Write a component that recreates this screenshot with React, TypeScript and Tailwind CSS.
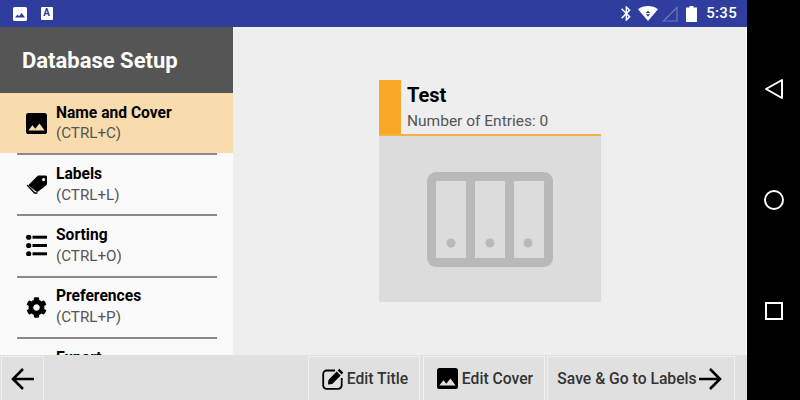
import React from 'react';
import { FaCog } from 'react-icons/fa';

const PhotoIcon = ({ className }: { className?: string }) => (
    <svg viewBox="3 3 18 18" className={className} fill="currentColor">
        <path d="M21 19V5c0-1.1-.9-2-2-2H5c-1.1 0-2 .9-2 2v14c0 1.1.9 2 2 2h14c1.1 0 2-.9 2-2zM8.5 13.5l2.5 3.01L14.5 12l4.5 6H5l3.5-4.5z" />
    </svg>
);

const TagIcon = () => (
    <svg viewBox="0 0 21 19" className="w-[21px] h-[19px]" fill="currentColor">
        <path fillRule="evenodd" d="M3 9.5L11.2 1.2C11.6.8 12 .6 12.6.6H19.5C20.4.6 21 1.2 21 2.1V8.8C21 9.4 20.8 9.8 20.4 10.2L12.2 16.5C11.5 17 10.8 17 10.2 16.4L3 10.8C2.6 10.4 2.6 9.9 3 9.5ZM17.6 3A1.6 1.6 0 1 0 17.6 6.2 1.6 1.6 0 1 0 17.6 3Z" />
        <path d="M1.2 10L8.6 18 11.5 18" fill="none" stroke="currentColor" strokeWidth="1.4" />
    </svg>
);

const ListIcon = () => (
    <svg viewBox="0 0 21 21" className="w-[21px] h-[21px]" fill="currentColor">
        <circle cx="2.7" cy="2.2" r="2.6" />
        <circle cx="2.7" cy="10.5" r="2.6" />
        <circle cx="2.7" cy="18.8" r="2.6" />
        <rect x="6.5" y="0.7" width="14.5" height="3" />
        <rect x="6.5" y="9" width="14.5" height="3" />
        <rect x="6.5" y="17.3" width="14.5" height="3" />
    </svg>
);

const EditIcon = () => (
    <svg viewBox="0 0 22 22" className="w-[22px] h-[22px] text-black mr-[3px] shrink-0">
        <path d="M13 2.5H5A3.5 3.5 0 0 0 1.2 6V17A3.5 3.5 0 0 0 5 20.8H16A3.5 3.5 0 0 0 19.7 17V10" fill="none" stroke="currentColor" strokeWidth="1.8" />
        <path d="M17.3.8L21.3 4.6 19.6 6.4 15.6 2.5ZM14.7 3.5L18.7 7.4 10.2 15.9 6 16.4 6.4 12Z" fill="currentColor" />
    </svg>
);

const Arrow = ({ flip }: { flip?: boolean }) => (
    <svg viewBox="0 0 24 24" className={`w-6 h-6 ${flip ? 'rotate-180' : ''}`} fill="none" stroke="currentColor" strokeWidth="2.6">
        <path d="M23 12H2M12 2L2 12l10 10" />
    </svg>
);

const menu = [
    { title: 'Name and Cover', sub: '(CTRL+C)', icon: <PhotoIcon className="w-[21px] h-[21px]" />, active: true },
    { title: 'Labels', sub: '(CTRL+L)', icon: <TagIcon /> },
    { title: 'Sorting', sub: '(CTRL+O)', icon: <ListIcon /> },
    { title: 'Preferences', sub: '(CTRL+P)', icon: <FaCog className="w-[21px] h-[21px]" /> },
    { title: 'Export', sub: '(CTRL+E)', icon: null },
];

const StatusBar = () => (
    <div className="h-[27px] shrink-0 bg-[#2f3e9e] flex items-center text-white">
        <svg viewBox="0 0 14 14" className="w-[14px] h-[14px] ml-[13px]">
            <rect width="14" height="14" rx="1.5" fill="#fff" />
            <path d="M2 10.5L4.5 7.5 6 9.3 8.7 6 12 10.5z" fill="#2f3e9e" />
        </svg>
        <div className="w-3 h-[13px] ml-[14px] bg-white rounded-[1px] text-[#2f3e9e] text-[10px] leading-[12px] font-bold text-center pr-px">A</div>
        <div className="flex-1" />
        <svg viewBox="5 2 13 20" className="w-[10px] h-[15px]" fill="currentColor">
            <path d="M17.71 7.71L12 2h-1v7.59L6.41 5 5 6.41 10.59 12 5 17.59 6.41 19 11 14.41V22h1l5.71-5.71-4.3-4.29 4.3-4.29zM13 5.83l1.88 1.88L13 9.59V5.83zm1.88 10.46L13 18.17v-3.76l1.88 1.88z" />
        </svg>
        <svg viewBox="0 0 20 15" className="w-[20px] h-[15px] ml-[7px]">
            <path d="M0 3.3C5.5-1 14.5-1 20 3.3L10 15z" fill="#fff" />
            <path d="M10 4.5l2.2 2.4H7.8zM10 10.7L7.8 8.3h4.4z" fill="#2f3e9e" />
        </svg>
        <svg viewBox="0 0 16 16" className="w-[16px] h-[16px] ml-[4px]" fill="none" stroke="#6d78bc" strokeWidth="1.2">
            <path d="M15 1.5V15H1.5z" />
        </svg>
        <svg viewBox="0 0 11 16" className="w-[11px] h-[16px] ml-[8px]" fill="#fff">
            <path d="M3.5 0h4v1.5H11V16H0V1.5h3.5z" />
        </svg>
        <span className="ml-[9px] mr-[10px] text-[15px] font-medium tracking-[0.3px]">5:35</span>
    </div>
);

const Sidebar = () => (
    <div className="w-[233px] shrink-0 bg-[#fafafa] flex flex-col overflow-hidden">
        <div className="h-[66px] shrink-0 bg-[#555555] flex items-center pl-[22px] text-white text-[22px] font-bold">
            Database Setup
        </div>
        {menu.map((item) => (
            <div key={item.title} className="shrink-0">
                <div className={`flex items-center ${item.active ? 'h-[60px] bg-[#f9dcae]' : 'h-[59.33px]'}`}>
                    <div className="w-[56px] pl-[26px] flex items-center shrink-0 text-black">{item.icon}</div>
                    <div className="leading-[21px]">
                        <div className={`text-[15.6px] font-bold text-black ${item.active ? 'mt-px' : ''}`}>{item.title}</div>
                        <div className={`text-[15.2px] text-[#555] ${item.active ? '-mt-px' : ''}`}>{item.sub}</div>
                    </div>
                </div>
                <div className="mx-[17px] w-[200px] h-[2px] bg-[#8a8a8a]" />
            </div>
        ))}
    </div>
);

const Cover = () => (
    <div className="flex-1 bg-[#eeeeee] pt-[53px] flex justify-center border-r border-[#f8f8f8]">
        <div className="w-[222px] h-[222px] ml-[1px]">
            <div className="h-[56px] flex border-b-2 border-[#f5b04a]">
                <div className="w-[22px] bg-[#f9a825]" />
                <div className="pl-[6px]">
                    <div className="text-[20px] font-bold text-black leading-[30px]">Test</div>
                    <div className="text-[15.5px] text-[#555] leading-[22px]">Number of Entries: 0</div>
                </div>
            </div>
            <div className="h-[166px] bg-[#dcdcdc] flex items-center justify-center">
                <svg viewBox="0 0 126 95" className="w-[126px] h-[95px]">
                    <rect width="126" height="95" rx="9" fill="#b9b9b9" />
                    <rect x="9" y="9" width="30" height="77" fill="#dcdcdc" />
                    <rect x="48" y="9" width="30" height="77" fill="#dcdcdc" />
                    <rect x="87" y="9" width="30" height="77" fill="#dcdcdc" />
                    <circle cx="24" cy="71" r="4.5" fill="#b9b9b9" />
                    <circle cx="63" cy="71" r="4.5" fill="#b9b9b9" />
                    <circle cx="101" cy="71" r="4.5" fill="#b9b9b9" />
                </svg>
            </div>
        </div>
    </div>
);

const BarButton = ({ className, children }: { className: string; children: React.ReactNode }) => (
    <div className={`h-[44px] mt-[1px] flex items-center justify-center bg-[#e0e0e0] border-t border-l border-r border-[#f0f0f0] text-[15.7px] font-medium text-[#333] ${className}`}>
        {children}
    </div>
);

const BottomBar = () => (
    <div className="h-[45px] shrink-0 bg-[#e0e0e0] flex">
        <BarButton className="w-[43px] ml-px text-black"><Arrow /></BarButton>
        <div className="flex-1" />
        <BarButton className="w-[112px] pl-[2px]"><EditIcon />Edit Title</BarButton>
        <BarButton className="w-[122px] ml-[3px] pl-[2px]"><PhotoIcon className="w-[21px] h-[21px] text-black mr-[4px]" />Edit Cover</BarButton>
        <BarButton className="w-[188px] ml-[2px] mr-[12px] pr-[3px]">Save &amp; Go to Labels<span className="text-black ml-px"><Arrow flip /></span></BarButton>
    </div>
);

const NavBar = () => (
    <div className="w-[53px] shrink-0 bg-black flex flex-col items-center pt-[78px] text-white">
        <svg viewBox="0 0 20 22" className="w-[20px] h-[22px]" fill="none" stroke="currentColor" strokeWidth="2">
            <path d="M18 2v18L2 11z" strokeLinejoin="round" />
        </svg>
        <svg viewBox="0 0 22 22" className="w-[22px] h-[22px] mt-[89px]" fill="none" stroke="currentColor" strokeWidth="2">
            <circle cx="11" cy="11" r="9" />
        </svg>
        <svg viewBox="0 0 18 18" className="w-[18px] h-[18px] mt-[91px]" fill="none" stroke="currentColor" strokeWidth="2">
            <rect x="1" y="1" width="16" height="16" />
        </svg>
    </div>
);

export default function App() {
    return (
        <div className="w-[800px] h-[400px] flex overflow-hidden font-['Roboto',sans-serif]">
            <div className="w-[747px] flex flex-col">
                <StatusBar />
                <div className="flex-1 min-h-0 flex">
                    <Sidebar />
                    <Cover />
                </div>
                <BottomBar />
            </div>
            <NavBar />
        </div>
    );
}
